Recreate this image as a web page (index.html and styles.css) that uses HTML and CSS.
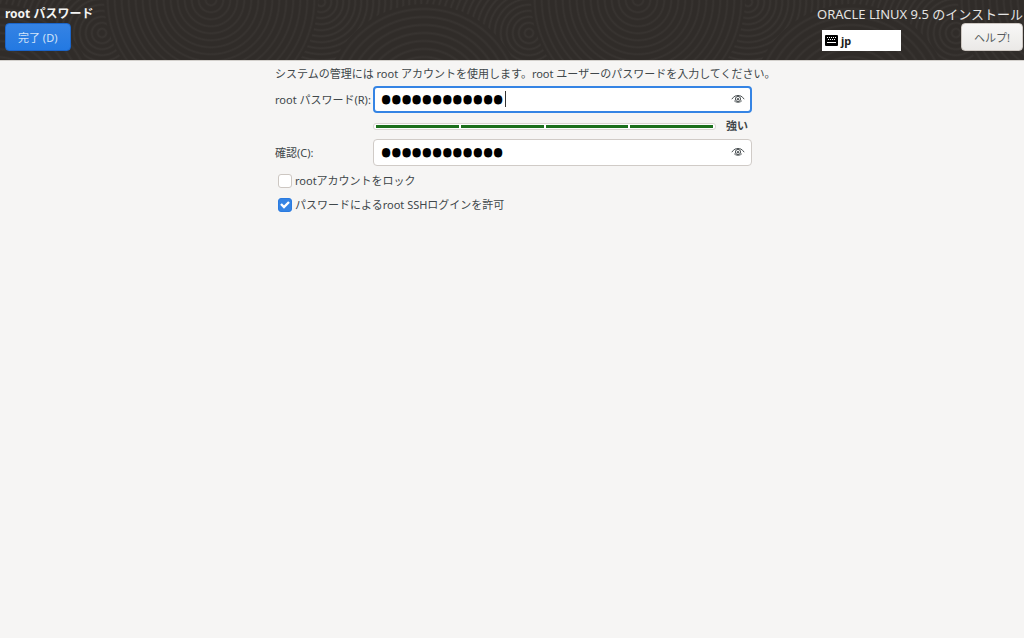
FILE: index.html
```html
<!DOCTYPE html>
<html lang="ja">
<head>
<meta charset="utf-8">
<meta name="viewport" content="width=device-width, initial-scale=1">
<title>root パスワード</title>
<link rel="stylesheet" href="styles.css">
</head>
<body>
<header class="topbar">
  <svg class="topbar-pattern" aria-hidden="true">
    <defs>
      <radialGradient id="g-small" gradientUnits="userSpaceOnUse" cx="105" cy="33" r="6" spreadMethod="repeat">
        <stop offset="0" stop-color="#302c29"/><stop offset=".4" stop-color="#302c29"/><stop offset=".7" stop-color="#393532"/><stop offset="1" stop-color="#302c29"/>
      </radialGradient>
      <radialGradient id="g-right" gradientUnits="userSpaceOnUse" cx="324" cy="2" r="6" spreadMethod="repeat">
        <stop offset="0" stop-color="#302c29"/><stop offset=".4" stop-color="#302c29"/><stop offset=".7" stop-color="#393532"/><stop offset="1" stop-color="#302c29"/>
      </radialGradient>
      <radialGradient id="g-bowl" gradientUnits="userSpaceOnUse" cx="214" cy="0" r="7" spreadMethod="repeat">
        <stop offset="0" stop-color="#302c29"/><stop offset=".5" stop-color="#302c29"/><stop offset=".75" stop-color="#383431"/><stop offset="1" stop-color="#302c29"/>
      </radialGradient>
      <radialGradient id="g-dome" gradientUnits="userSpaceOnUse" cx="427" cy="103" r="8" spreadMethod="repeat">
        <stop offset="0" stop-color="#302c29"/><stop offset=".5" stop-color="#302c29"/><stop offset=".75" stop-color="#383431"/><stop offset="1" stop-color="#302c29"/>
      </radialGradient>
      <radialGradient id="g-dome-left" gradientUnits="userSpaceOnUse" cx="0" cy="103" r="8" spreadMethod="repeat">
        <stop offset="0" stop-color="#302c29"/><stop offset=".5" stop-color="#302c29"/><stop offset=".75" stop-color="#383431"/><stop offset="1" stop-color="#302c29"/>
      </radialGradient>
      <pattern id="rings" patternUnits="userSpaceOnUse" x="-3" y="0" width="427" height="60">
        <rect width="214" height="60" fill="url(#g-small)"/>
        <rect x="214" width="213" height="60" fill="url(#g-right)"/>
        <circle cx="214" cy="0" r="107" fill="url(#g-bowl)"/>
        <circle cx="0" cy="103" r="99" fill="url(#g-dome-left)"/>
        <circle cx="427" cy="103" r="99" fill="url(#g-dome)"/>
      </pattern>
    </defs>
    <rect width="100%" height="100%" fill="url(#rings)"/>
  </svg>
  <div class="topbar-left">
    <h1 class="page-title">root パスワード</h1>
    <button class="btn btn-primary" type="submit" form="root-form">完了 (D)</button>
  </div>
  <div class="topbar-right">
    <p class="product">ORACLE LINUX 9.5 のインストール</p>
    <div class="topbar-tools">
      <button class="layout" type="button">
        <svg width="13" height="11" viewBox="0 0 13 11" aria-hidden="true">
          <rect width="13" height="11" rx="1"/>
          <path fill="none" stroke="#fff" d="M2 2.500h1m1 0h1m1 0h1m1 0h1m1 0h1M3 4.500h1m1 0h1m1 0h1m1 0h1M2 7.500h9"/>
        </svg>
        jp
      </button>
      <button class="btn" type="button">ヘルプ!</button>
    </div>
  </div>
</header>
<main>
  <form class="form" id="root-form">
    <p class="intro">システムの管理には root アカウントを使用します。root ユーザーのパスワードを入力してください。</p>
    <label class="label" for="pw">root パスワード(R):</label>
    <div class="field">
      <input class="entry entry-active" id="pw" type="password" value="oracle-linux">
      <span class="caret"></span>
      <button class="reveal" type="button" aria-label="パスワードを表示">
        <svg width="14" height="10" viewBox="0 0 14 10" fill="none" stroke="#4a5053" aria-hidden="true">
          <path d="M.8 5.200C3 2 5 1.500 7 1.500s4 .5 6.200 3.700"/><path stroke-width=".8" d="M3 6.500C5 9 9 9 11 6.500"/><circle cx="7" cy="5" r="2.600"/><circle cx="7" cy="5.200" r=".8" fill="#4a5053"/>
        </svg>
      </button>
    </div>
    <div class="strength">
      <div class="levels" role="img" aria-label="パスワードの強度"><span></span><span></span><span></span><span></span></div>
      <strong class="strength-text">強い</strong>
    </div>
    <label class="label" for="confirm">確認(C):</label>
    <div class="field">
      <input class="entry" id="confirm" type="password" value="oracle-linux">
      <button class="reveal" type="button" aria-label="パスワードを表示">
        <svg width="14" height="10" viewBox="0 0 14 10" fill="none" stroke="#4a5053" aria-hidden="true">
          <path d="M.8 5.200C3 2 5 1.500 7 1.500s4 .5 6.200 3.700"/><path stroke-width=".8" d="M3 6.500C5 9 9 9 11 6.500"/><circle cx="7" cy="5" r="2.600"/><circle cx="7" cy="5.200" r=".8" fill="#4a5053"/>
        </svg>
      </button>
    </div>
    <div class="options">
      <label class="option"><input class="check" type="checkbox">rootアカウントをロック</label>
      <label class="option"><input class="check" type="checkbox" checked>パスワードによるroot SSHログインを許可</label>
    </div>
  </form>
</main>
</body>
</html>
```
FILE: styles.css
```css
* { box-sizing: border-box; }
body {
  margin: 0;
  min-height: 100vh;
  background: #f6f5f4;
  color: #40474a;
  font: 11px/16px "Noto Sans", "Noto Sans CJK JP", sans-serif;
}
h1, p { margin: 0; }
button, input { font: inherit; color: inherit; }

.topbar {
  position: relative;
  display: flex;
  justify-content: space-between;
  padding: 5px 1px 9px 5px;
  background: #302c29;
  border-bottom: 1px solid #d3d0cc;
  color: #fff;
}
.topbar-pattern { position: absolute; inset: 0; width: 100%; height: 100%; }
.topbar-left, .topbar-right { position: relative; display: flex; flex-direction: column; }
.topbar-left { align-items: flex-start; }
.page-title { font-size: 12px; line-height: 18px; font-weight: 700; color: #f4f4f3; }
.product { font-size: 13px; line-height: 18px; color: #e4e3e2; white-space: nowrap; }
.topbar-tools { display: flex; justify-content: flex-end; align-items: flex-start; gap: 60px; }
.btn {
  height: 28px;
  padding: 1px 12px 0;
  border: 1px solid #cdc7c2;
  border-radius: 4px;
  background: linear-gradient(#f8f7f6, #ebe9e7);
  color: #555b5e;
}
.btn-primary {
  border-color: #1b65c9;
  background: linear-gradient(#3583e4, #2379e2);
  color: #d3e3f8;
}
.layout {
  display: flex;
  align-items: center;
  gap: 3px;
  width: 79px;
  height: 21px;
  margin-top: 7px;
  padding: 0 3px;
  border: 0;
  background: #fff;
  color: #1c1c1c;
  font-weight: 700;
}

.form {
  display: grid;
  grid-template-columns: 98px minmax(0, 379px);
  justify-content: center;
  align-items: center;
  padding: 5px 0 0 3px;
}
.intro { grid-column: 1 / -1; white-space: nowrap; margin-bottom: 4px; }
.label { white-space: nowrap; }
.field { position: relative; }
.entry {
  display: block;
  width: 100%;
  height: 27px;
  padding: 0 32px 0 7px;
  border: 1px solid #d0cbc7;
  border-radius: 4px;
  outline: 0;
  background: #fff;
  color: #000;
  font-size: 26px;
  font-weight: 900;
}
.entry-active { border: 2px solid #3584e4; padding-left: 6px; }
.caret { position: absolute; left: 132px; top: 5px; width: 1px; height: 16px; background: #333; }
.reveal {
  position: absolute;
  right: 7px;
  top: 4px;
  display: flex;
  align-items: center;
  justify-content: center;
  width: 14px;
  height: 18px;
  padding: 0;
  border: 0;
  background: none;
}
.strength {
  grid-column: 2;
  display: flex;
  align-items: center;
  height: 26px;
  padding-right: 4px;
  gap: 10px;
}
.levels {
  flex: 1;
  display: flex;
  gap: 2px;
  height: 7px;
  padding: 1px 2px;
  border: 1px solid #dad6d2;
  border-radius: 3px;
  background: #fff;
}
.levels span { flex: 1; background: #1c701c; }
.strength-text { font-weight: 700; }
.options { grid-column: 1 / -1; display: grid; gap: 8px; padding: 7px 0 0 3px; justify-items: start; }
.option { display: flex; align-items: center; gap: 3px; }
.check {
  appearance: none;
  width: 14px;
  height: 14px;
  margin: 0;
  border: 1px solid #cdc7c2;
  border-radius: 3px;
  background: #fff;
}
.check:checked {
  border-color: #2b7be0;
  background: #3584e4 url("data:image/svg+xml,%3Csvg xmlns='http://www.w3.org/2000/svg' viewBox='0 0 12 12'%3E%3Cpath d='M2 5l3 3 5-5' fill='none' stroke='white' stroke-width='2.400'/%3E%3C/svg%3E") center / 12px no-repeat;
}
```
